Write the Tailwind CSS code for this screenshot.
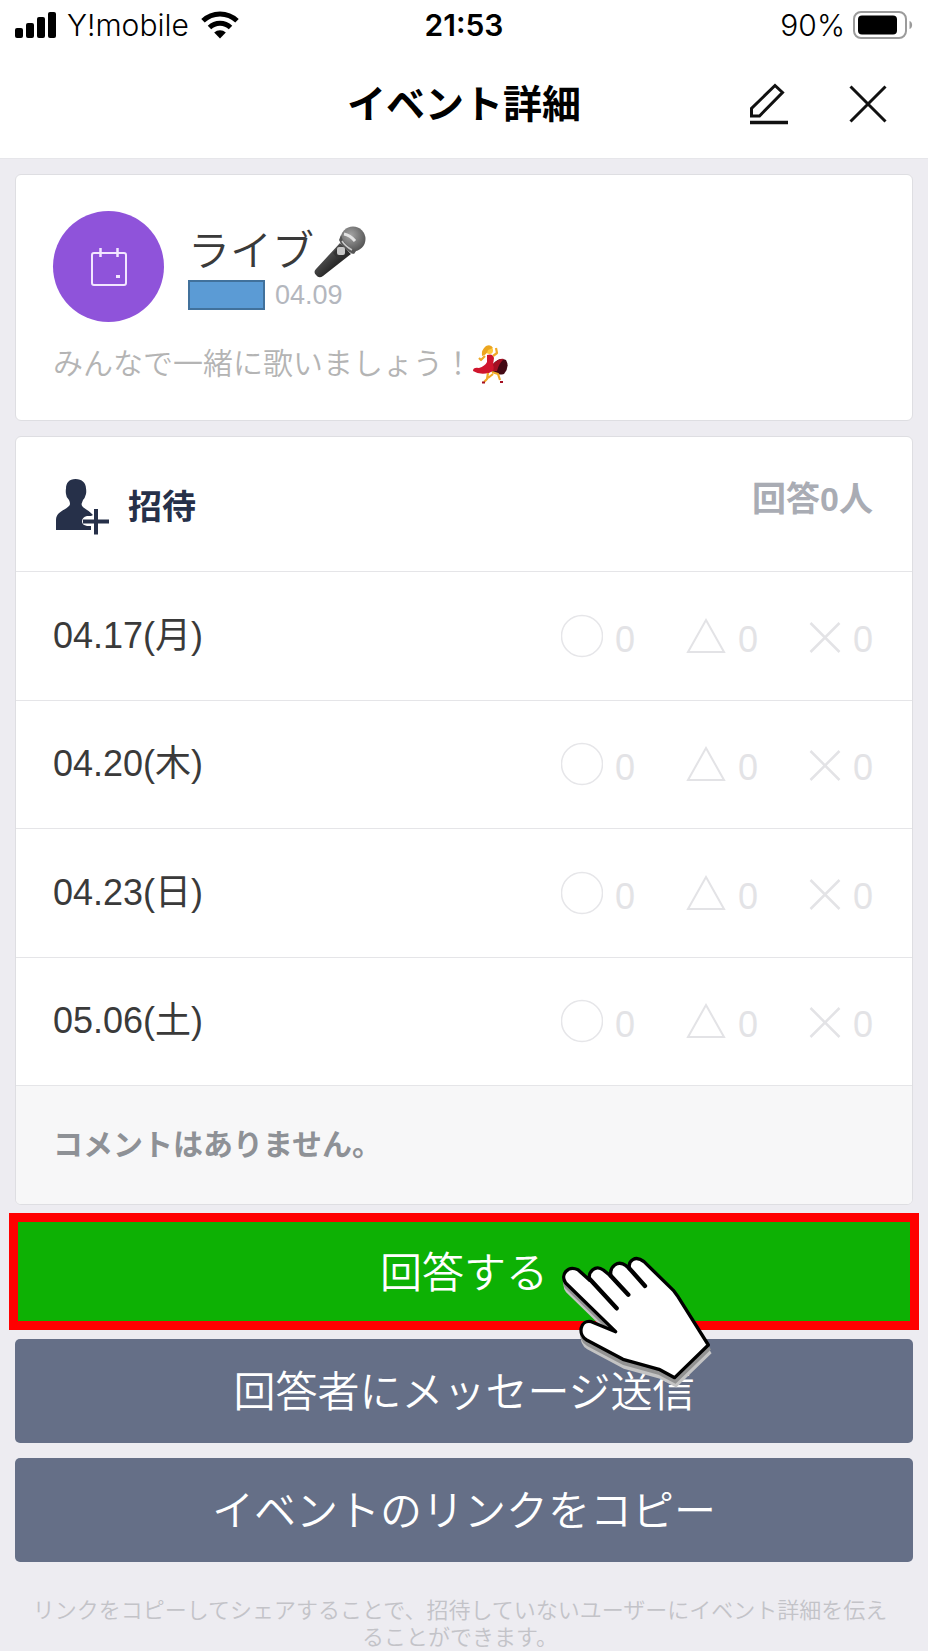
<!DOCTYPE html>
<html lang="ja">
<head>
<meta charset="utf-8">
<meta name="viewport" content="width=device-width, initial-scale=1">
<title>イベント詳細</title>
<script src="https://cdn.jsdelivr.net/npm/@tailwindcss/browser@4"></script>
</head>
<body class="min-h-screen bg-[#edecf1] font-['Liberation_Sans','Noto_Sans_CJK_JP',sans-serif] text-[#3a3a3a]">

<header class="border-b border-[#e6e6ea] bg-white text-black">
  <div class="grid h-[50px] grid-cols-[1fr_auto_1fr] items-center px-[15px] font-['Inter',sans-serif] text-[30px] leading-none">
    <div class="flex items-center">
      <svg class="mr-[10px] h-[28px] w-[42px]" viewBox="0 0 42 28" role="img" aria-label="電波">
        <rect x="0" y="17" width="8" height="10" rx="2"/><rect x="11" y="12" width="8" height="15" rx="2"/><rect x="22" y="6" width="8" height="21" rx="2"/><rect x="33" y="1" width="8" height="26" rx="2"/>
      </svg>
      <span class="mr-3 font-light">Y!mobile</span>
      <svg class="h-[28px] w-[38px]" viewBox="0 0 38 28" role="img" aria-label="Wi-Fi">
        <g fill="none" stroke="#000" stroke-width="5"><path d="M2 9.800a24.500 24.500 0 0 1 34 0"/><path d="M8.500 16.500a15 15 0 0 1 21 0"/></g>
        <path d="M13.200 21.500a8.300 8.300 0 0 1 11.600 0L19 27.500z"/>
      </svg>
    </div>
    <span class="font-semibold">21:53</span>
    <div class="flex items-center justify-end gap-2">
      <span class="font-light">90%</span>
      <svg class="h-[28px] w-[60px]" viewBox="0 0 60 28" role="img" aria-label="バッテリー">
        <rect x="1" y="1" width="52" height="26" rx="7" fill="none" stroke="#9b9b9b" stroke-width="2"/>
        <rect x="5" y="4.500" width="39" height="19" rx="4"/>
        <path d="M56.500 10c3.500 1 3.500 7 0 8z" fill="#9b9b9b"/>
      </svg>
    </div>
  </div>
  <div class="grid h-[108px] grid-cols-[1fr_auto_1fr] items-center px-[41px]">
    <span></span>
    <h1 class="text-[39px] leading-none font-bold">イベント詳細</h1>
    <div class="flex items-center justify-end gap-[60px]">
      <button type="button" aria-label="編集">
        <svg class="h-[42px] w-[40px]" viewBox="0 0 40 42" fill="none" stroke="#111" stroke-width="3"><path d="M2.500 33V25.500L26 2.500L33.500 9.500L10.500 33z"/><path d="M1 39.500H39" stroke-width="3.500"/></svg>
      </button>
      <button type="button" aria-label="閉じる">
        <svg class="h-[38px] w-[38px]" viewBox="0 0 38 38" fill="none" stroke="#111" stroke-width="3"><path d="M1.500 1.500L36.500 36.500M36.500 1.500L1.500 36.500"/></svg>
      </button>
    </div>
  </div>
</header>

<main class="px-[15px] pt-[15px]">
  <section class="h-[247px] rounded-md border border-[#dedee2] bg-white px-[37px] pt-[36px]">
    <div class="flex gap-6">
      <div class="grid size-[111px] place-items-center rounded-full bg-[#8f53da]">
        <svg class="h-[38px] w-[36px]" viewBox="0 0 36 38" fill="none" stroke="#f2e6ff" stroke-width="2" aria-hidden="true"><rect x="1" y="5" width="34" height="32" rx="2"/><path d="M9.500 0V9M26.500 0V9" stroke-width="2.500"/><rect x="25" y="27" width="4" height="3" fill="#f2e6ff" stroke="none"/></svg>
      </div>
      <div class="flex flex-col pt-[13px]">
        <h2 class="flex h-[56px] items-center text-[42px] leading-none font-[350]">ライブ
          <svg class="h-[52px] w-[52px]" viewBox="0 0 52 52" role="img" aria-label="マイク">
            <defs>
              <linearGradient id="micBody" x1="0" y1="0" x2="1" y2="1"><stop offset=".3" stop-color="#555"/><stop offset=".6" stop-color="#2a2a2a"/></linearGradient>
              <radialGradient id="micHead" cx=".4" cy=".35" r=".7"><stop offset="0" stop-color="#a5a5a5"/><stop offset="1" stop-color="#505050"/></radialGradient>
            </defs>
            <path d="M26 17L37 28L9 50Q5 53 2 49Q-1 46 2 43z" fill="url(#micBody)"/>
            <path d="M26 16L38 28L41 26L28 11z" fill="#777"/>
            <circle cx="39" cy="13" r="12.500" fill="url(#micHead)"/>
            <path d="M27 9Q29 19 42 25L40 28Q29 24 25 14z" fill="#555"/>
            <path d="M30 8Q36 9 41 15" fill="none" stroke="#e4e4e4" stroke-width="3"/>
            <path d="M28 15Q31 20 38 24" fill="none" stroke="#c9c9c9" stroke-width="1.500"/>
            <path d="M19 27L25 21L32 26L23 32z" fill="#333"/>
            <rect x="23" y="21" width="8" height="8" rx="2" fill="#c6c6c6"/>
          </svg>
        </h2>
        <div class="flex items-center gap-[10px]">
          <span class="h-[30px] w-[77px] border-2 border-[#41719c] bg-[#5b9bd5]"></span>
          <time class="text-[27px] leading-[30px] text-[#b4b7be]">04.09</time>
        </div>
      </div>
    </div>
    <p class="mt-[21px] flex h-[42px] items-center text-[30px] leading-none font-[350] text-[#b4b4b4]">みんなで一緒に歌いましょう！
      <svg class="h-[40px] w-[36px]" viewBox="0 0 36 40" role="img" aria-label="踊る女性">
        <path d="M20 20Q26 13 33 16Q37 23 31 30Q24 32 18 27z" fill="#430914"/>
        <path d="M20 20Q26 14 31 15Q26 19 24 27L18 27z" fill="#a50f22"/>
        <path d="M14 11Q20 9 21 14L20 21Q23 26 16 29Q6 31 0 27Q0 23 6 24Q12 22 14 18z" fill="#d0152d"/>
        <path d="M12 12L8 16L6 14M20 12L24 9L23 4M15 29L14 35L11 38M19 28L25 30L27 36M20 30L15 34" fill="none" stroke="#f0a928" stroke-width="2.200" stroke-linejoin="round"/>
        <circle cx="16.500" cy="6.500" r="3.500" fill="#ffc83a"/>
        <path d="M9 12Q8 6 13 2Q18 0 20 4L15 6Q14 11 9 12z" fill="#eca61f"/>
        <path d="M9 38.500H12M27 38L30 38" stroke="#a50f22" stroke-width="2"/>
      </svg>
    </p>
  </section>

  <section class="mt-[15px] overflow-hidden rounded-md border border-[#dedee2] bg-white">
    <div class="flex h-[135px] items-start justify-between border-b border-[#e5e5e8] px-[39px] pt-[42px] text-[34px] font-bold">
      <button type="button" class="flex items-center gap-[19px] text-[#263049]">
        <svg class="h-[56px] w-[54px]" viewBox="0 0 54 56" aria-hidden="true">
          <path d="M20.500 0C27 0 31 4 31 9.500Q31.500 12 31 15Q30 19 28 21L26.500 25C26.500 29 34 31 38 36L36 37H32Q27 38 27 42.500Q27 46 32 47H36V51H1V41C1 33 9 32 14 27Q16 25.500 14 21Q11 18 11 15Q10.500 12 11 9.500C11 4 14 0 20.500 0z" fill="currentColor"/>
          <path d="M28 42.500H54M41 30V55.500" fill="none" stroke="currentColor" stroke-width="4"/>
        </svg>
        <span class="leading-none">招待</span>
      </button>
      <span class="pt-[3px] leading-none text-[#a9acb4]">回答0人</span>
    </div>

    <svg class="hidden" aria-hidden="true">
      <symbol id="yes" viewBox="0 0 42 44"><circle cx="21" cy="22" r="20.500" fill="none" stroke="#e6e6e9" stroke-width="1.500"/></symbol>
      <symbol id="maybe" viewBox="0 0 40 44"><path d="M20 6L38 38H2z" fill="none" stroke="#e3e3e6" stroke-width="2"/></symbol>
      <symbol id="no" viewBox="0 0 32 44"><path d="M1.500 9L30.500 38M30.500 9L1.500 38" fill="none" stroke="#e3e3e6" stroke-width="2.500"/></symbol>
    </svg>

    <ul class="grid h-[514px] auto-rows-fr text-[36px] leading-[44px]">
      <li class="flex items-center justify-between border-b border-[#e5e5e8] pr-[39px] pl-[37px]">
        <span>04.17(月)</span>
        <span class="flex gap-[51px] pt-1 text-[#e3e3e6]">
          <span class="flex gap-3"><svg class="h-[44px] w-[42px]" role="img" aria-label="参加"><use href="#yes"/></svg><span class="pt-1">0</span></span>
          <span class="flex gap-3"><svg class="h-[44px] w-[40px]" role="img" aria-label="未定"><use href="#maybe"/></svg><span class="pt-1">0</span></span>
          <span class="flex gap-3"><svg class="h-[44px] w-[32px]" role="img" aria-label="不参加"><use href="#no"/></svg><span class="pt-1">0</span></span>
        </span>
      </li>
      <li class="flex items-center justify-between border-b border-[#e5e5e8] pr-[39px] pl-[37px]">
        <span>04.20(木)</span>
        <span class="flex gap-[51px] pt-1 text-[#e3e3e6]">
          <span class="flex gap-3"><svg class="h-[44px] w-[42px]" role="img" aria-label="参加"><use href="#yes"/></svg><span class="pt-1">0</span></span>
          <span class="flex gap-3"><svg class="h-[44px] w-[40px]" role="img" aria-label="未定"><use href="#maybe"/></svg><span class="pt-1">0</span></span>
          <span class="flex gap-3"><svg class="h-[44px] w-[32px]" role="img" aria-label="不参加"><use href="#no"/></svg><span class="pt-1">0</span></span>
        </span>
      </li>
      <li class="flex items-center justify-between border-b border-[#e5e5e8] pr-[39px] pl-[37px]">
        <span>04.23(日)</span>
        <span class="flex gap-[51px] pt-1 text-[#e3e3e6]">
          <span class="flex gap-3"><svg class="h-[44px] w-[42px]" role="img" aria-label="参加"><use href="#yes"/></svg><span class="pt-1">0</span></span>
          <span class="flex gap-3"><svg class="h-[44px] w-[40px]" role="img" aria-label="未定"><use href="#maybe"/></svg><span class="pt-1">0</span></span>
          <span class="flex gap-3"><svg class="h-[44px] w-[32px]" role="img" aria-label="不参加"><use href="#no"/></svg><span class="pt-1">0</span></span>
        </span>
      </li>
      <li class="flex items-center justify-between border-b border-[#e5e5e8] pr-[39px] pl-[37px]">
        <span>05.06(土)</span>
        <span class="flex gap-[51px] pt-1 text-[#e3e3e6]">
          <span class="flex gap-3"><svg class="h-[44px] w-[42px]" role="img" aria-label="参加"><use href="#yes"/></svg><span class="pt-1">0</span></span>
          <span class="flex gap-3"><svg class="h-[44px] w-[40px]" role="img" aria-label="未定"><use href="#maybe"/></svg><span class="pt-1">0</span></span>
          <span class="flex gap-3"><svg class="h-[44px] w-[32px]" role="img" aria-label="不参加"><use href="#no"/></svg><span class="pt-1">0</span></span>
        </span>
      </li>
    </ul>
    <p class="flex h-[118px] items-center bg-[#f7f7f8] px-[37px] text-[30px] leading-none font-bold text-[#8e9196]">コメントはありません。</p>
  </section>

  <div class="relative z-10 -mx-[6px] mt-2">
    <button type="button" class="block h-[117px] w-full border-[9px] border-[#ff0000] bg-[#0db104] pt-1 text-[42px] leading-none font-[350] text-white">回答する</button>
    <svg class="pointer-events-none absolute top-[41px] left-1/2 ml-[95px] h-[137px] w-[155px]" viewBox="285 189 465 411" aria-hidden="true">
      <defs><path id="hand" d="M455 422L305 276C288 252 310 222 342 236L377 268C370 242 395 220 418 237L441 256C435 226 462 206 486 224L497 234C490 208 515 192 540 212L628 298L640 314L733 462L632 560L585 535L477 505L368 447C340 430 348 386 382 392z"/></defs>
      <use href="#hand" transform="translate(4 24)" fill="#c4c4c4" stroke="#c4c4c4" stroke-width="9"/>
      <use href="#hand" transform="translate(2 13)" fill="#929292" stroke="#929292" stroke-width="9"/>
      <use href="#hand" fill="#fff" stroke="#000" stroke-width="10" stroke-linejoin="round"/>
      <path d="M375 262L458 352M440 254L493 311M496 232L543 285" fill="none" stroke="#000" stroke-width="13" stroke-linecap="round"/>
    </svg>
  </div>
  <button type="button" class="mt-[9px] block h-[104px] w-full rounded-[5px] bg-[#656f87] pt-1 text-[42px] leading-none font-[350] text-white">回答者にメッセージ送信</button>
  <button type="button" class="mt-[15px] block h-[104px] w-full rounded-[5px] bg-[#656f87] pt-1 text-[42px] leading-none font-[350] text-white">イベントのリンクをコピー</button>
  <p class="mt-[35px] pr-4 pl-2 text-center text-[22px] leading-[27px] font-[350] text-[#c3c3c8]">リンクをコピーしてシェアすることで、招待していないユーザーにイベント詳細を伝えることができます。</p>
</main>
</body>
</html>
